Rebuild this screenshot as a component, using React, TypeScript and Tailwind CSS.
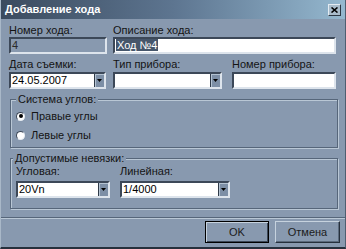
import React from "react";

const sunken =
  "border-2 border-t-[#3c4858] border-l-[#3c4858] border-b-[#dde4ec] border-r-[#dde4ec]";

const Label = ({ children }: { children: React.ReactNode }) => (
  <div className="h-[14px] leading-[14px] whitespace-nowrap">{children}</div>
);

const ArrowBtn = () => (
  <div className="w-[10px] h-full flex items-center justify-center bg-[#7d8fa6] border-l border-[#2f3a48] shadow-[inset_1px_1px_0_#b4c3d2]">
    <svg width="5" height="3" viewBox="0 0 5 3">
      <path d="M0 0h5L2.5 3z" fill="#000" />
    </svg>
  </div>
);

const Combo = ({ value, width }: { value?: string; width: string }) => (
  <div className={`${width} h-[17px] flex bg-white ${sunken}`}>
    <div className="flex-1 pl-[1px] leading-[13px] text-black">{value}</div>
    <ArrowBtn />
  </div>
);

const Radio = ({ checked, label }: { checked?: boolean; label: string }) => (
  <div className="flex items-center gap-[6px] h-[14px]">
    <div className="w-[9px] h-[9px] rounded-full bg-white border border-t-[#3c4858] border-l-[#3c4858] border-b-[#e6ecf2] border-r-[#e6ecf2] flex items-center justify-center">
      {checked && <div className="w-[4px] h-[4px] rounded-full bg-black" />}
    </div>
    <span>{label}</span>
  </div>
);

export default function App() {
  return (
    <div
      className="w-[346px] h-[249px] flex flex-col bg-[#8899af] text-[11px] text-[#141414] border-l border-[#a9b8c8] border-r border-r-[#4f5e70] border-b-2 border-b-[#26303c] overflow-hidden"
      style={{ fontFamily: '"Liberation Sans", Arial, sans-serif' }}
    >
      {/* title bar */}
      <div className="h-[19px] flex items-center justify-between pl-[4px] pr-[4px] bg-linear-to-r from-[#3b4b5f] via-[#5d7590] to-[#95b8cf]">
        <span className="text-white font-bold text-[11px]">Добавление хода</span>
        <div className="w-[13px] h-[12px] bg-[#a9bccb] border border-t-[#e3ebf2] border-l-[#e3ebf2] border-b-[#2d3845] border-r-[#2d3845] flex items-center justify-center">
          <svg width="7" height="6" viewBox="0 0 7 6">
            <path d="M0.5 0.5L6.5 5.5M6.5 0.5L0.5 5.5" stroke="#000" strokeWidth="1.6" />
          </svg>
        </div>
      </div>

      <div className="flex flex-col pl-[8px] pr-[9px] pt-[4px]">
        {/* row 1 */}
        <div className="flex gap-[6px]">
          <div className="w-[98px]">
            <Label>Номер хода:</Label>
            <div className={`h-[17px] bg-[#8899af] pl-[1px] leading-[13px] text-[#2a2a2a] ${sunken}`}>4</div>
          </div>
          <div className="w-[223px]">
            <Label>Описание хода:</Label>
            <div className={`h-[17px] bg-white pl-[1px] leading-[13px] ${sunken}`}>
              <span className="bg-[#46566b] text-white px-[1px]">Ход №4</span>
            </div>
          </div>
        </div>

        {/* row 2 */}
        <div className="flex mt-[3px]">
          <div className="w-[97px]">
            <Label>Дата съемки:</Label>
            <div className="mt-[1px]">
              <Combo value="24.05.2007" width="w-[97px]" />
            </div>
          </div>
          <div className="w-[109px] ml-[7px]">
            <Label>Тип прибора:</Label>
            <div className="mt-[1px]">
              <Combo width="w-[109px]" />
            </div>
          </div>
          <div className="w-[104px] ml-[10px]">
            <Label>Номер прибора:</Label>
            <div className={`mt-[1px] h-[17px] bg-white ${sunken}`} />
          </div>
        </div>

        {/* group 1 */}
        <fieldset className="ml-[1px] mt-[4px] w-[328px] h-[55px] border border-[#56667a] shadow-[1px_1px_0_#b9c7d5,inset_1px_1px_0_#b9c7d5]">
          <legend className="ml-[5px] px-[2px] bg-[#8899af] leading-[13px]">Система углов:</legend>
          <div className="flex flex-col gap-[5px] pl-[5px] pt-[3px]">
            <Radio checked label="Правые углы" />
            <Radio label="Левые углы" />
          </div>
        </fieldset>

        {/* group 2 */}
        <fieldset className="ml-[1px] mt-[4px] w-[328px] h-[57px] border border-[#56667a] shadow-[1px_1px_0_#b9c7d5,inset_1px_1px_0_#b9c7d5]">
          <legend className="ml-[2px] px-[2px] bg-[#8899af] leading-[13px]">Допустимые невязки:</legend>
          <div className="flex pl-[5px]">
            <div className="w-[94px]">
              <div className="h-[13px] leading-[13px]">Угловая:</div>
              <div className="mt-[3px]">
                <Combo value="20Vn" width="w-[94px]" />
              </div>
            </div>
            <div className="w-[110px] ml-[10px]">
              <div className="h-[13px] leading-[13px]">Линейная:</div>
              <div className="mt-[3px]">
                <Combo value="1/4000" width="w-[110px]" />
              </div>
            </div>
          </div>
        </fieldset>
      </div>

      {/* separator */}
      <div className="mt-[8px] h-[2px] border-t border-[#56667a] border-b border-b-[#b9c7d5]" />

      {/* buttons */}
      <div className="flex justify-end gap-[6px] pr-[5px] mt-[2px]">
        <button className="w-[64px] h-[22px] border border-black bg-[#8899af] shadow-[inset_1px_1px_0_#c6d2de,inset_-1px_-1px_0_#3c4858] text-[#1c1c1c]">
          OK
        </button>
        <button className="w-[65px] h-[22px] bg-[#8899af] border border-t-[#c6d2de] border-l-[#c6d2de] border-b-[#26303c] border-r-[#26303c] shadow-[inset_-1px_-1px_0_#5b6a7d] text-[#1c1c1c]">
          Отмена
        </button>
      </div>
    </div>
  );
}
